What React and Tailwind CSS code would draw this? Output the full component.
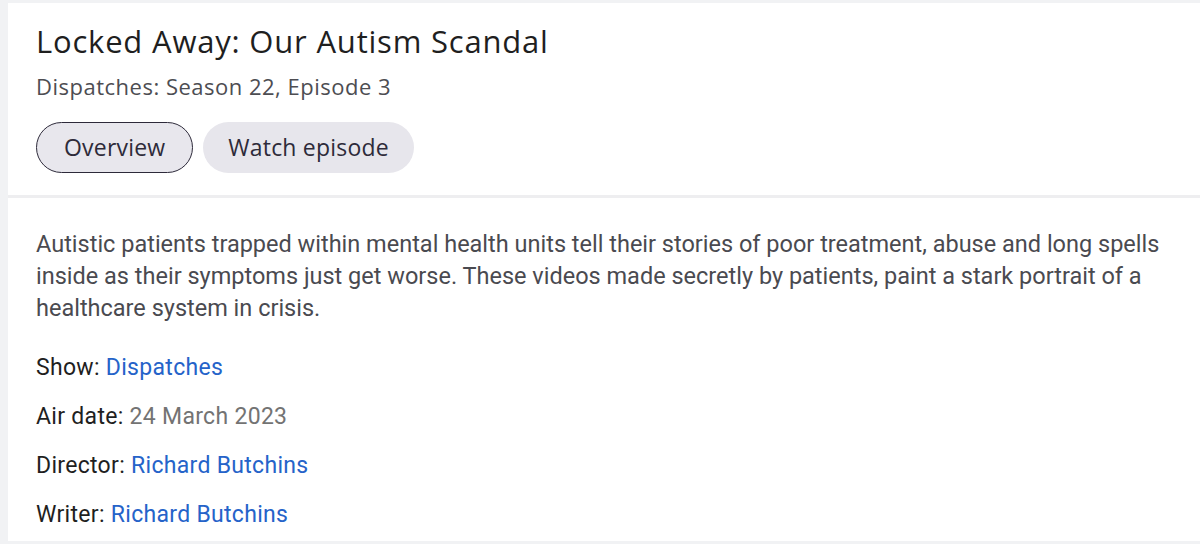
import React from 'react';

const roboto = { fontFamily: 'Roboto, "Liberation Sans", sans-serif' };
const heading = { fontFamily: '"Open Sans", Roboto, sans-serif' };

function MetaRow({ label, value, link }) {
  return (
    <p className="text-[23px] leading-[49px] tracking-[0.3px] text-[#1f1f1f]">
      {label}:{' '}
      <span className={link ? 'text-[#2563c9]' : 'text-[#737373]'}>{value}</span>
    </p>
  );
}

export default function App() {
  return (
    <div className="bg-[#f1f2f4] pl-[8px] pt-[3px] pb-[3px] h-[544px] overflow-hidden" style={roboto}>
      <div className="bg-white pl-[28px] pt-[18px] h-[192px]" style={heading}>
        <h1 className="text-[31px] leading-[40px] tracking-[0.8px] text-[#1f1f1f]">
          Locked Away: Our Autism Scandal
        </h1>
        <p className="mt-[10px] text-[22px] leading-[30px] tracking-[0.5px] text-[#4d4d52]">
          Dispatches: Season 22, Episode 3
        </p>
        <div className="mt-[21px] flex gap-[10px]">
          <button className="h-[51px] px-[27px] rounded-full bg-[#e8e7ed] border-[1.5px] border-[#2d2a3a] text-[23px] tracking-[0.2px] text-[#2e2b3a]">
            Overview
          </button>
          <button className="h-[51px] px-[25px] rounded-full bg-[#e7e6ec] text-[23px] tracking-[0.2px] text-[#2e2b3a]">
            Watch episode
          </button>
        </div>
      </div>
      <div className="h-[3px] bg-[#eeeef0]" />
      <div className="bg-white pl-[28px] pt-[30px] h-[343px]">
        <p className="text-[23.5px] leading-[32px] text-[#4a4a50] whitespace-nowrap">
          Autistic patients trapped within mental health units tell their stories of poor treatment, abuse and long spells
          <br />
          inside as their symptoms just get worse. These videos made secretly by patients, paint a stark portrait of a
          <br />
          healthcare system in crisis.
        </p>
        <div className="mt-[19px]">
          <MetaRow label="Show" value="Dispatches" link />
          <MetaRow label="Air date" value="24 March 2023" />
          <MetaRow label="Director" value="Richard Butchins" link />
          <MetaRow label="Writer" value="Richard Butchins" link />
        </div>
      </div>
    </div>
  );
}
